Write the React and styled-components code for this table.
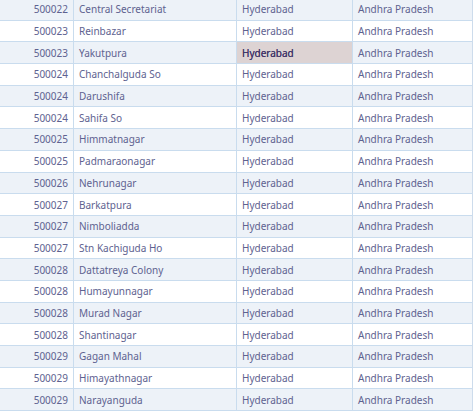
import styled, { createGlobalStyle } from "styled-components";

const GlobalStyle = createGlobalStyle`
  html, body {
    margin: 0;
    padding: 0;
    background: #ffffff;
  }
  body {
    font-family: "Noto Sans", "DejaVu Sans", sans-serif;
    overflow: hidden;
  }
`;

const Table = styled.div`
  width: 472px;
  margin-top: -1px;
  border-right: 1px solid #cddcec;
`;

const Row = styled.div`
  display: grid;
  grid-template-columns: 73px 163px 116px 1fr;
  height: 21.7px;
  box-sizing: border-box;
  border-bottom: 1px solid #c9dcee;
  background: ${(p) => (p.$shaded ? "#edf2f8" : "#ffffff")};
`;

const Cell = styled.div`
  display: flex;
  align-items: center;
  justify-content: ${(p) => (p.$num ? "flex-end" : "flex-start")};
  padding: ${(p) => (p.$num ? "0 5px 0 0" : "0 0 0 5px")};
  border-left: ${(p) => (p.$first ? "none" : "1px solid #c9dcee")};
  font-size: 10px;
  color: ${(p) => (p.$active ? "#43386a" : "#5e6290")};
  text-shadow: ${(p) => (p.$active ? "0 0 0.4px #43386a" : "none")};
  background: ${(p) => (p.$active ? "#ddd3d3" : "transparent")};
  white-space: nowrap;
  overflow: hidden;
`;

const rows = [
  ["500022", "Central Secretariat"],
  ["500023", "Reinbazar"],
  ["500023", "Yakutpura"],
  ["500024", "Chanchalguda So"],
  ["500024", "Darushifa"],
  ["500024", "Sahifa So"],
  ["500025", "Himmatnagar"],
  ["500025", "Padmaraonagar"],
  ["500026", "Nehrunagar"],
  ["500027", "Barkatpura"],
  ["500027", "Nimboliadda"],
  ["500027", "Stn Kachiguda Ho"],
  ["500028", "Dattatreya Colony"],
  ["500028", "Humayunnagar"],
  ["500028", "Murad Nagar"],
  ["500028", "Shantinagar"],
  ["500029", "Gagan Mahal"],
  ["500029", "Himayathnagar"],
  ["500029", "Narayanguda"],
];

export default function App() {
  return (
    <>
      <GlobalStyle />
      <Table>
        {rows.map(([pin, office], i) => (
          <Row key={i} $shaded={i % 2 === 0}>
            <Cell $num $first>{pin}</Cell>
            <Cell>{office}</Cell>
            <Cell $active={i === 2}>Hyderabad</Cell>
            <Cell>Andhra Pradesh</Cell>
          </Row>
        ))}
      </Table>
    </>
  );
}
